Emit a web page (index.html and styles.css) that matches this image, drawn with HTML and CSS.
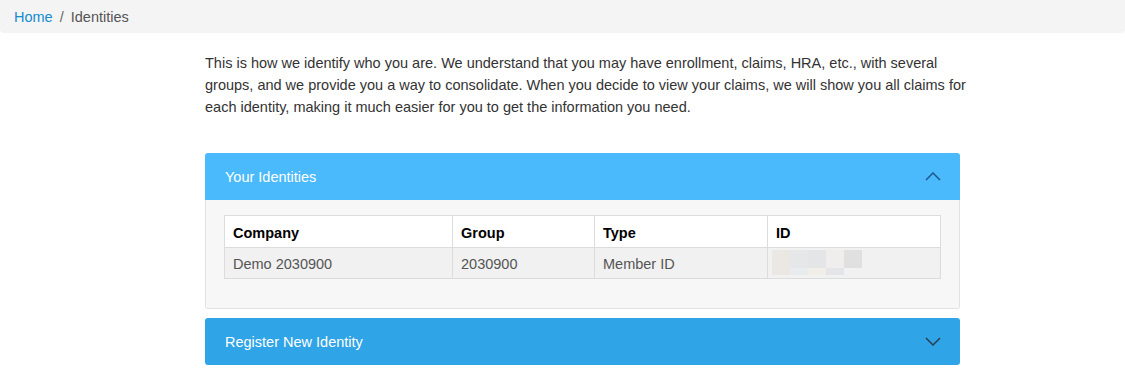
FILE: index.html
```html
<!DOCTYPE html>
<html lang="en">
<head>
  <meta charset="UTF-8" />
  <title>Identities</title>
  <link rel="stylesheet" href="styles.css">
</head>
<body>
  <nav class="breadcrumb">
    <a href="#">Home</a>
    <span class="sep">/</span>
    <span class="current">Identities</span>
  </nav>

  <main class="content">
    <p class="intro">This is how we identify who you are. We understand that you may have enrollment, claims, HRA, etc., with several groups, and we provide you a way to consolidate. When you decide to view your claims, we will show you all claims for each identity, making it much easier for you to get the information you need.</p>

    <section class="panel">
      <div class="panel-heading open">
        <span>Your Identities</span>
        <svg class="chevron" width="16" height="9" viewBox="0 0 16 9"><path d="M1 8 L8 1 L15 8" fill="none" stroke="currentColor" stroke-width="1.5"/></svg>
      </div>
      <div class="panel-body">
        <table>
          <thead>
            <tr>
              <th class="c1">Company</th>
              <th class="c2">Group</th>
              <th class="c3">Type</th>
              <th>ID</th>
            </tr>
          </thead>
          <tbody>
            <tr>
              <td>Demo 2030900</td>
              <td>2030900</td>
              <td>Member ID</td>
              <td>
                <div class="blur">
                  <i style="background:#ebe8e4"></i><i style="background:#e5e7e8"></i><i style="background:#e3e5e6"></i><i style="background:#efeeec"></i><i style="background:#e0e0e0"></i>
                  <i style="background:#ebe8e4"></i><i style="background:#e8ecee"></i><i style="background:#f1eee8"></i><i style="background:#e3e5e8"></i><i style="background:transparent"></i>
                </div>
              </td>
            </tr>
          </tbody>
        </table>
      </div>
    </section>

    <section class="panel">
      <div class="panel-heading closed">
        <span>Register New Identity</span>
        <svg class="chevron" width="16" height="9" viewBox="0 0 16 9"><path d="M1 1 L8 8 L15 1" fill="none" stroke="currentColor" stroke-width="1.5"/></svg>
      </div>
    </section>
  </main>
</body>
</html>
```
FILE: styles.css
```css
* { box-sizing: border-box; }
body {
  margin: 0;
  font-family: 'Liberation Sans', Arial, sans-serif;
  font-size: 14.5px;
  color: #333;
  background: #fff;
}
.breadcrumb {
  background: #f4f4f4;
  height: 33px;
  padding: 0 14px;
  display: flex;
  align-items: center;
  gap: 7px;
  border-radius: 0 0 4px 4px;
  line-height: 20px;
}
.breadcrumb a {
  color: #158cd0;
  text-decoration: none;
}
.breadcrumb .sep { color: #666; }
.breadcrumb .current { color: #555; }

.content {
  width: 755px;
  margin-left: 205px;
}
.intro {
  width: 770px;
  margin: 19px 0 35px;
  line-height: 22px;
  color: #333;
}
.panel {
  margin-bottom: 9px;
  border-radius: 3px;
  overflow: hidden;
}
.panel-heading {
  height: 47px;
  padding: 0 20px;
  display: flex;
  align-items: center;
  justify-content: space-between;
  color: #fff;
}
.panel-heading.open {
  background: #4abafd;
}
.panel-heading.open .chevron { color: #1b5a8e; }
.panel-heading.closed {
  background: #2fa4e6;
}
.panel-heading.closed .chevron { color: #2c3e50; }
.chevron { margin-right: -1px; }

.panel-body {
  background: #f7f7f7;
  border: 1px solid #e2e2e4;
  border-top: none;
  padding: 15px 18px 29px;
}
table {
  width: 100%;
  border-collapse: collapse;
}
th, td {
  border: 1px solid #dcdcdc;
  text-align: left;
  padding: 0 8px;
  height: 32px;
}
th {
  background: #fff;
  color: #000;
  font-weight: bold;
  padding-top: 3px;
}
td {
  background: #f1f1f1;
  color: #555;
  height: 31px;
  padding-top: 2px;
}
.c1 { width: 228px; }
.c2 { width: 142px; }
.c3 { width: 173px; }
.blur {
  display: grid;
  grid-template-columns: repeat(5, 18px);
  grid-template-rows: 18px 7px;
  margin-top: -4px;
  margin-left: -4px;
}
.blur i { display: block; }
```
